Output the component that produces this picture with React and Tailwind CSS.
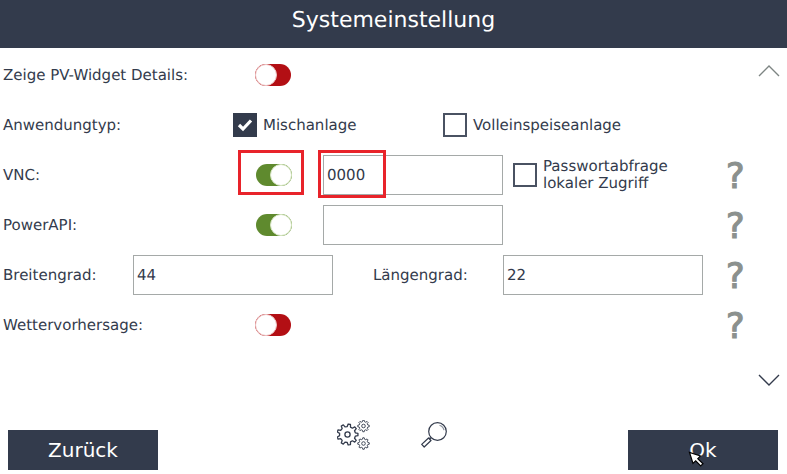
import React from "react";

const font = { fontFamily: '"DejaVu Sans", sans-serif' };

const gearPath = (cx, cy, r, teeth) => {
  const pts = [];
  const outer = r;
  const inner = r * 0.76;
  for (let i = 0; i < teeth; i++) {
    const step = (Math.PI * 2) / teeth;
    const a = i * step;
    [
      [inner, a - step * 0.3],
      [outer, a - step * 0.16],
      [outer, a + step * 0.16],
      [inner, a + step * 0.3],
    ].forEach(([d, t]) => {
      pts.push(`${(cx + d * Math.cos(t)).toFixed(2)} ${(cy + d * Math.sin(t)).toFixed(2)}`);
    });
  }
  return "M" + pts.join("L") + "Z";
};

const Gears = () => (
  <svg width="33" height="30" viewBox="0 0 33 30" fill="none" stroke="#333b4c">
    <path d={gearPath(10.5, 14.5, 10.5, 9)} strokeWidth="1.3" strokeLinejoin="round" />
    <circle cx="10.5" cy="14.5" r="2.6" strokeWidth="1.3" />
    <path d={gearPath(26.5, 6, 5.8, 8)} strokeWidth="0.9" strokeLinejoin="round" />
    <circle cx="26.5" cy="6" r="1.8" strokeWidth="0.9" />
    <path d={gearPath(26.5, 23.5, 5.8, 8)} strokeWidth="0.9" strokeLinejoin="round" />
    <circle cx="26.5" cy="23.5" r="1.8" strokeWidth="0.9" />
  </svg>
);

const Magnifier = () => (
  <svg width="26" height="26" viewBox="0 0 26 26" fill="none" stroke="#333b4c">
    <circle cx="16.5" cy="9.5" r="8.8" strokeWidth="1.2" />
    <path d="M18.5 3.2a6.5 6.5 0 0 1 4.5 5" stroke="#8f95a0" strokeWidth="1.2" />
    <path d="M10 16l-2 .5" strokeWidth="1.4" />
    <path d="M7.5 16L.7 22.4 3.2 25 10 18.5z" strokeWidth="1.2" strokeLinejoin="round" />
  </svg>
);

const Toggle = ({ on }) =>
  on ? (
    <div className="flex h-[22px] w-9 justify-end rounded-full bg-[#5f8a2e]">
      <div className="h-[22px] w-[22px] rounded-full border border-[#d5e6c0] bg-white" />
    </div>
  ) : (
    <div className="flex h-[22px] w-9 rounded-full bg-[#b30f14]">
      <div className="h-[22px] w-[22px] rounded-full border border-[#eec4c4] bg-white" />
    </div>
  );

const Check = ({ checked }) =>
  checked ? (
    <div className="flex h-6 w-6 items-center justify-center bg-[#333b4c]">
      <svg width="16" height="14" viewBox="0 0 16 14" fill="none" stroke="white" strokeWidth="3.2">
        <path d="M2 7l4 4 8-8.5" />
      </svg>
    </div>
  ) : (
    <div className="h-6 w-6 border-2 border-[#4a5262] bg-white" />
  );

const Help = () => (
  <div className="mt-[4px] w-[16px] text-[35px] leading-none text-[#8b918e] [-webkit-text-stroke:1.2px_#8b918e]">?</div>
);

const Row = ({ children }) => <div className="flex h-[50px] items-center text-[15px]">{children}</div>;

const Label = ({ w, className = "", children }) => (
  <span className={`${w} ${className}`}>{children}</span>
);

const Field = ({ w, value }) => (
  <div className={`flex h-10 items-center border border-[#a5a9a8] bg-white pl-[3px] text-[15px] ${w}`}>{value}</div>
);

const Chevron = ({ up }) => (
  <svg width="22" height="12" viewBox="0 0 22 12" fill="none" stroke={up ? "#7d8583" : "#333b4c"} strokeWidth="1.4">
    <path d={up ? "M1 11L11 1l10 10" : "M1 1l10 10L21 1"} />
  </svg>
);

export default function App() {
  return (
    <div className="relative flex h-[474px] w-[787px] flex-col overflow-hidden bg-white text-[#333b4c] [text-rendering:geometricPrecision]" style={font}>
      <header className="flex h-[48px] items-center justify-center bg-[#333b4c] pb-[8px] text-[22px] text-white">
        Systemeinstellung
      </header>

      <div className="flex h-[346px] pt-[2px]">
        <div className="w-[750px] pl-[3px]">
          <Row>
            <Label w="w-[252px]">Zeige PV-Widget Details:</Label>
            <Toggle />
          </Row>
          <Row>
            <Label w="w-[230px]">Anwendungtyp:</Label>
            <Check checked />
            <Label w="w-[180px]" className="ml-[6px]">Mischanlage</Label>
            <Check />
            <Label w="w-auto" className="ml-[6px]">Volleinspeiseanlage</Label>
          </Row>
          <Row>
            <Label w="w-[253px]">VNC:</Label>
            <div className="relative">
              <Toggle on />
              <div className="absolute -left-[18px] -top-[14px] h-[45px] w-[66px] border-[3px] border-[#e8232a]" />
            </div>
            <div className="relative ml-[31px]">
              <Field w="w-[180px]" value="0000" />
              <div className="absolute -left-[5px] -top-[5px] h-[48px] w-[68px] border-[3px] border-[#e8232a]" />
            </div>
            <div className="ml-[10px]"><Check /></div>
            <span className="ml-[6px] w-[183px] text-[15px] leading-[17px]">Passwortabfrage<br />lokaler Zugriff</span>
            <Help />
          </Row>
          <Row>
            <Label w="w-[253px]">PowerAPI:</Label>
            <Toggle on />
            <div className="ml-[31px] w-[403px]"><Field w="w-[180px]" /></div>
            <Help />
          </Row>
          <Row>
            <Label w="w-[130px]">Breitengrad:</Label>
            <Field w="w-[200px]" value="44" />
            <Label w="w-[130px]" className="ml-[40px]">Längengrad:</Label>
            <Field w="w-[200px]" value="22" />
            <div className="ml-[23px]"><Help /></div>
          </Row>
          <Row>
            <Label w="w-[252px]">Wettervorhersage:</Label>
            <Toggle />
            <div className="ml-[435px]"><Help /></div>
          </Row>
        </div>
        <div className="flex w-[37px] flex-col justify-between pb-[8px] pl-2 pt-[15px]">
          <Chevron up />
          <Chevron />
        </div>
      </div>

      <footer className="flex h-[80px] items-start justify-between px-2">
        <button className="mt-[36px] h-10 w-[150px] bg-[#333b4c] text-[20px] text-white">Zurück</button>
        <div className="flex items-start gap-[51px] pr-[2px] pt-[26px]">
          <Gears />
          <div className="pt-[2px]"><Magnifier /></div>
        </div>
        <div className="relative mr-[1px] mt-[36px]">
          <button className="h-10 w-[150px] bg-[#333b4c] text-[20px] text-white">Ok</button>
          <svg className="absolute left-[60px] top-[21px]" width="17" height="17" viewBox="0 0 17 17">
            <path d="M1.5 1.5l3.5 11 2.7-2.7 5 5.2 2.3-2.3-5.2-5 2.7-2.7z" fill="white" stroke="black" strokeWidth="1.2" />
          </svg>
        </div>
      </footer>
    </div>
  );
}
